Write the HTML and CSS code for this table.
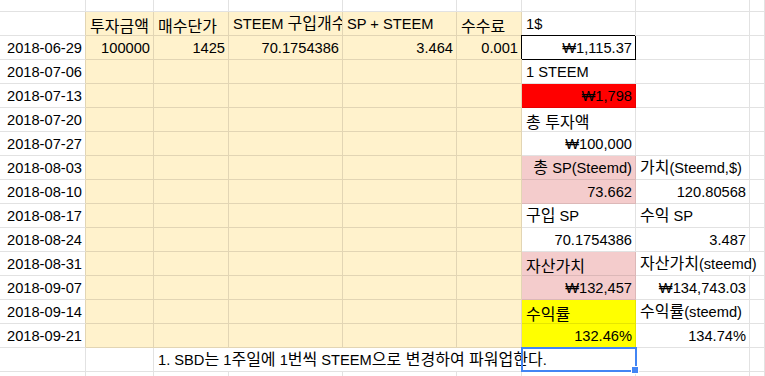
FILE: index.html
```html
<!DOCTYPE html>
<html lang="ko">
<head>
<meta charset="utf-8">
<title>Sheet</title>
<link rel="stylesheet" href="styles.css">
</head>
<body>
<div class="sheet">
  <!-- partial top row -->
  <div class="c"></div><div class="c"></div><div class="c"></div><div class="c"></div><div class="c"></div><div class="c"></div><div class="c"></div><div class="c"></div><div class="c"></div>

  <!-- header -->
  <div class="c ab"></div>
  <div class="c bg"><span class="k">투자금액</span></div>
  <div class="c bg"><span class="k">매수단가</span></div>
  <div class="c bg clip"><span>STEEM <span class="k">구입개수</span></span></div>
  <div class="c bg">SP + STEEM</div>
  <div class="c bg"><span class="k">수수료</span></div>
  <div class="c">1$</div>
  <div class="c"></div>
  <div class="c"></div>

  <div class="c r ab">2018-06-29</div>
  <div class="c bg r">100000</div>
  <div class="c bg r">1425</div>
  <div class="c bg r">70.1754386</div>
  <div class="c bg r">3.464</div>
  <div class="c bg r">0.001</div>
  <div class="c r box">₩1,115.37</div>
  <div class="c"></div>
  <div class="c"></div>

  <div class="c r ab">2018-07-06</div>
  <div class="c bg"></div><div class="c bg"></div><div class="c bg"></div><div class="c bg"></div><div class="c bg"></div>
  <div class="c">1 STEEM</div>
  <div class="c"></div>
  <div class="c"></div>

  <div class="c r ab">2018-07-13</div>
  <div class="c bg"></div><div class="c bg"></div><div class="c bg"></div><div class="c bg"></div><div class="c bg"></div>
  <div class="c r rd">₩1,798</div>
  <div class="c"></div>
  <div class="c"></div>

  <div class="c r ab">2018-07-20</div>
  <div class="c bg"></div><div class="c bg"></div><div class="c bg"></div><div class="c bg"></div><div class="c bg"></div>
  <div class="c"><span class="k">총 투자액</span></div>
  <div class="c"></div>
  <div class="c"></div>

  <div class="c r ab">2018-07-27</div>
  <div class="c bg"></div><div class="c bg"></div><div class="c bg"></div><div class="c bg"></div><div class="c bg"></div>
  <div class="c r">₩100,000</div>
  <div class="c"></div>
  <div class="c"></div>

  <div class="c r ab">2018-08-03</div>
  <div class="c bg"></div><div class="c bg"></div><div class="c bg"></div><div class="c bg"></div><div class="c bg"></div>
  <div class="c r pk"><span><span class="k">총</span> SP(Steemd)</span></div>
  <div class="c"><span><span class="k">가치</span>(Steemd,$)</span></div>
  <div class="c"></div>

  <div class="c r ab">2018-08-10</div>
  <div class="c bg"></div><div class="c bg"></div><div class="c bg"></div><div class="c bg"></div><div class="c bg"></div>
  <div class="c r pk">73.662</div>
  <div class="c r">120.80568</div>
  <div class="c"></div>

  <div class="c r ab">2018-08-17</div>
  <div class="c bg"></div><div class="c bg"></div><div class="c bg"></div><div class="c bg"></div><div class="c bg"></div>
  <div class="c"><span><span class="k">구입</span> SP</span></div>
  <div class="c"><span><span class="k">수익</span> SP</span></div>
  <div class="c"></div>

  <div class="c r ab">2018-08-24</div>
  <div class="c bg"></div><div class="c bg"></div><div class="c bg"></div><div class="c bg"></div><div class="c bg"></div>
  <div class="c r">70.1754386</div>
  <div class="c r">3.487</div>
  <div class="c"></div>

  <div class="c r ab">2018-08-31</div>
  <div class="c bg"></div><div class="c bg"></div><div class="c bg"></div><div class="c bg"></div><div class="c bg"></div>
  <div class="c pk"><span class="k">자산가치</span></div>
  <div class="c wide"><span><span class="k">자산가치</span>(steemd)</span></div>

  <div class="c r ab">2018-09-07</div>
  <div class="c bg"></div><div class="c bg"></div><div class="c bg"></div><div class="c bg"></div><div class="c bg"></div>
  <div class="c r pk">₩132,457</div>
  <div class="c r">₩134,743.03</div>
  <div class="c"></div>

  <div class="c r ab">2018-09-14</div>
  <div class="c bg"></div><div class="c bg"></div><div class="c bg"></div><div class="c bg"></div><div class="c bg"></div>
  <div class="c yl"><span class="k">수익률</span></div>
  <div class="c"><span><span class="k">수익률</span>(steemd)</span></div>
  <div class="c"></div>

  <div class="c r ab">2018-09-21</div>
  <div class="c bg"></div><div class="c bg"></div><div class="c bg"></div><div class="c bg"></div><div class="c bg"></div>
  <div class="c r yl">132.46%</div>
  <div class="c r">134.74%</div>
  <div class="c"></div>

  <!-- note row -->
  <div class="c"></div>
  <div class="c"></div>
  <div class="c note"><span>1. SBD<span class="k">는</span> 1<span class="k">주일에</span> 1<span class="k">번씩</span> STEEM<span class="k">으로 변경하여 파워업한다</span>.</span></div>
  <div class="c"></div>
  <div class="c"></div>

  <!-- partial bottom row -->
  <div class="c"></div><div class="c"></div><div class="c"></div><div class="c"></div><div class="c"></div><div class="c"></div><div class="c"></div><div class="c"></div><div class="c"></div>

  <div class="selection"><span class="handle"></span></div>
</div>
</body>
</html>
```

FILE: styles.css
```css
html, body {
  margin: 0;
  padding: 0;
  background: #fff;
  overflow: hidden;
}

.sheet {
  position: relative;
  display: grid;
  grid-template-columns: 86px 68px 75px 114px 114px 65px 114px 114px 1fr;
  grid-template-rows: 12px repeat(15, 24px) 5px;
  width: 765px;
  height: 376px;
  overflow: hidden;
  font-family: "Liberation Sans", Arial, "Noto Sans CJK KR", sans-serif;
  font-size: 14.67px;
  color: #000;
}

.c {
  box-sizing: border-box;
  border-right: 1px solid #e2e2e2;
  border-bottom: 1px solid #e2e2e2;
  padding: 0 4px 2px 4px;
  display: flex;
  align-items: flex-end;
  white-space: nowrap;
  overflow: hidden;
  line-height: 18px;
  background: #fff;
}

.k {
  font-family: "Noto Sans CJK KR", sans-serif;
  font-size: 16px;
  line-height: 16px;
}

.r {
  justify-content: flex-end;
  padding-right: 3px;
}

.ab {
  border-right-color: #e2d5b4;
}

.bg {
  background: #fff2cc;
  border-right-color: #e2d5b4;
  border-bottom-color: #e2d5b4;
}

.clip {
  padding-right: 0;
}

.box {
  position: relative;
  z-index: 1;
  border-right-color: #000;
  border-bottom-color: #000;
  box-shadow: -1px -1px 0 0 #000;
}

.rd {
  background: #ff0000;
  border-right-color: #e60000;
  border-bottom-color: #e60000;
}

.pk {
  background: #f4cccc;
  border-right-color: #dcb8b8;
  border-bottom-color: #dcb8b8;
}

.yl {
  background: #ffff00;
  border-right-color: #e6e600;
  border-bottom-color: #e6e600;
}

.wide {
  grid-column: span 2;
}

.note {
  grid-column: 3 / span 5;
}

.selection {
  position: absolute;
  left: 521px;
  top: 347px;
  width: 116px;
  height: 25px;
  box-sizing: border-box;
  border: 2px solid #4285f4;
  z-index: 2;
}

.handle {
  position: absolute;
  right: -4px;
  bottom: -4px;
  width: 6px;
  height: 6px;
  background: #4285f4;
  border: 1px solid #fff;
}
```
